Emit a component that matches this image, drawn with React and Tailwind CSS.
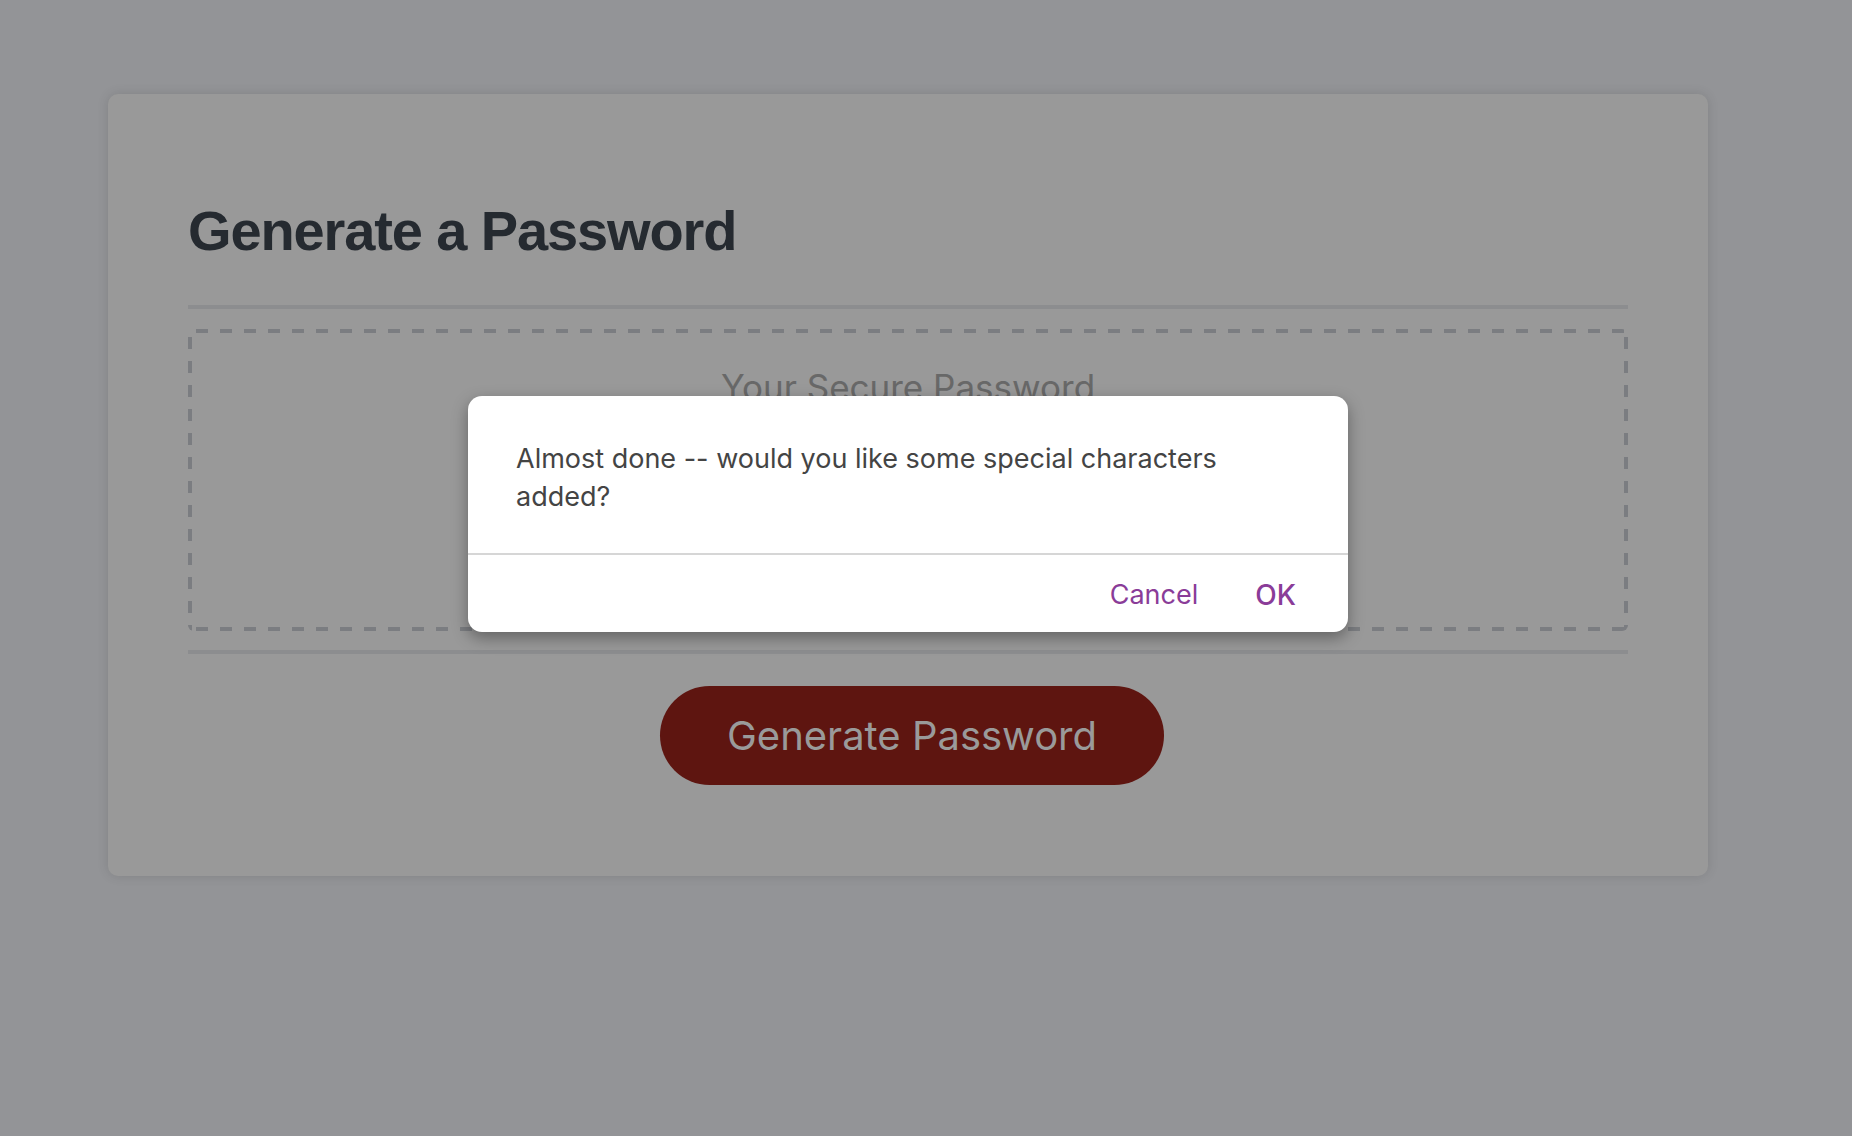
// Gerador de senha com o diálogo de confirmação aberto por cima.

function ConfirmDialog() {
  return (
    <div className="absolute left-[468px] top-[396px] w-[880px] h-[236px] rounded-[14px] bg-white shadow-[0_6px_16px_rgba(0,0,0,0.35)] font-['Inter',sans-serif]">
      <p className="max-w-[760px] pl-[48px] pt-[44px] pb-[37px] text-[27px] leading-[38px] text-[#444444]">
        Almost done -- would you like some special characters added?
      </p>
      <div className="h-[2px] bg-[#d6d6d6]" />
      <div className="flex h-[77px] items-center justify-end gap-[57px] pr-[52px] pt-[3px] text-[27px] text-[#8a3c98]">
        <button>Cancel</button>
        <button className="text-[28px] font-medium">OK</button>
      </div>
    </div>
  );
}

export default function App() {
  return (
    <div className="relative min-h-screen bg-[#939497] pl-[108px] pt-[94px]">
      <div className="w-[1600px] h-[782px] rounded-[10px] bg-[#999999] px-[80px] pt-[109px] shadow-[0_0_12px_rgba(0,0,0,0.12)]">
        <h1 className="font-['Liberation_Sans',Arial,sans-serif] text-[56px] font-bold leading-none tracking-[-0.02em] text-[#252a30]">
          Generate a Password
        </h1>

        <div className="mt-[46px] h-[4px] bg-[#8c8d8f]" />

        {/* borda tracejada feita com gradientes para ter traços de 12px */}
        <div className="mt-[20px] h-[302px] rounded-[6px] pt-[41px] text-center bg-[linear-gradient(to_right,#7b7d81_12px,transparent_12px),linear-gradient(to_right,#7b7d81_12px,transparent_12px),linear-gradient(to_bottom,#7b7d81_12px,transparent_12px),linear-gradient(to_bottom,#7b7d81_12px,transparent_12px)] [background-size:24px_4px,24px_4px,4px_24px,4px_24px] [background-position:8px_0,8px_100%,0_8px,100%_8px] [background-repeat:repeat-x,repeat-x,repeat-y,repeat-y]">
          <span className="font-['Inter',sans-serif] text-[35px] leading-none text-[#686868]">
            Your Secure Password
          </span>
        </div>

        <div className="mt-[19px] h-[4px] bg-[#8c8d8f]" />

        <div className="mt-[32px] flex justify-center pl-[8px]">
          <button className="h-[99px] w-[504px] rounded-full bg-[#5e1510] font-['Inter',sans-serif] text-[40px] text-[#9a9a9a]">
            Generate Password
          </button>
        </div>
      </div>

      <ConfirmDialog />
    </div>
  );
}
